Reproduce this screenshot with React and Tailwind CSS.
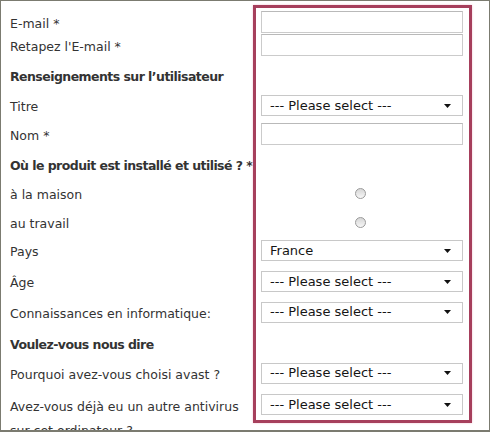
import React from 'react';

const Input = () => (
  <div className="h-[22px] w-[202px] border border-[#cbcbcb] border-t-[#b9b9b9] bg-white" />
);

const Select = ({ value = '--- Please select ---' }) => (
  <div className="flex h-[21px] w-[202px] items-center justify-between border border-[#c8c8c8] bg-white pl-[8px] pr-[11px] text-[13px] text-[#151515]">
    <span>{value}</span>
    <svg width="7" height="4" viewBox="0 0 7 4">
      <path d="M0 0h7L3.5 4z" fill="#111" />
    </svg>
  </div>
);

const Radio = () => (
  <div className="flex w-[202px] justify-center">
    <span className="ml-[-4px] block h-[11px] w-[11px] rounded-full border border-[#9a9a9a] bg-linear-to-b from-[#d6d6d6] to-[#f7f7f7]" />
  </div>
);

const Row = ({ label, className, children }) => (
  <div className={`flex items-center ${className}`}>
    <div className="w-[251px] shrink-0 pt-[4px]">{label}</div>
    {children}
  </div>
);

const Heading = ({ className, children }) => (
  <div className={`flex items-center whitespace-nowrap pt-[4px] font-bold tracking-[-0.55px] ${className}`}>
    {children}
  </div>
);

export default function App() {
  return (
    <div className="relative h-[432px] w-[490px] overflow-hidden border border-b-2 border-[#7b7b70] bg-white font-['DejaVu_Sans',sans-serif] text-[12.5px] text-[#333]">
      <div className="pl-[9px] pt-[9px]">
        <Row label="E-mail *" className="h-[24px]"><Input /></Row>
        <Row label="Retapez l'E-mail *" className="h-[22px]"><Input /></Row>
        <Heading className="h-[38px]">Renseignements sur l’utilisateur</Heading>
        <Row label="Titre" className="h-[23px]"><Select /></Row>
        <Row label="Nom *" className="h-[34px]"><Input /></Row>
        <Heading className="h-[26px]">Où le produit est installé et utilisé ? *</Heading>
        <Row label="à la maison" className="h-[32px]"><Radio /></Row>
        <Row label="au travail" className="h-[26px]"><Radio /></Row>
        <Row label="Pays" className="h-[31px]"><Select value="France" /></Row>
        <Row label="Âge" className="h-[31px]"><Select /></Row>
        <Row label="Connaissances en informatique:" className="h-[30px]"><Select /></Row>
        <Heading className="h-[32px]">Voulez-vous nous dire</Heading>
        <Row label="Pourquoi avez-vous choisi avast ?" className="h-[28px]"><Select /></Row>
        <div className="flex items-start pt-[7px]">
          <div className="w-[251px] shrink-0 pt-[1px] leading-[24px]">Avez-vous déjà eu un autre antivirus sur cet ordinateur ?</div>
          <Select />
        </div>
      </div>
      <div className="absolute left-[252px] top-[4px] h-[418px] w-[219px] border-[3px] border-[#a63f5c] shadow-[0_0_2px_#f2c2d0]" />
    </div>
  );
}
